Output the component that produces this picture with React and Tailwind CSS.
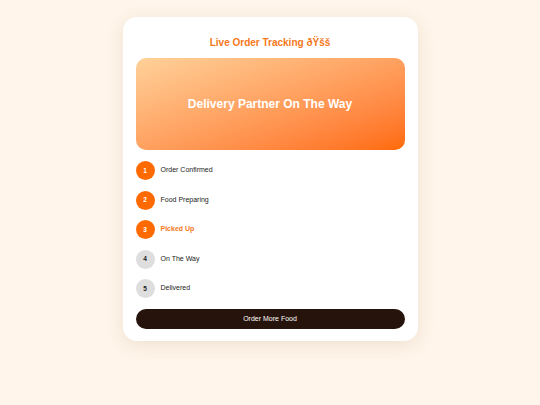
const steps = [
  { n: 1, label: 'Order Confirmed', done: true },
  { n: 2, label: 'Food Preparing', done: true },
  { n: 3, label: 'Picked Up', done: true, active: true },
  { n: 4, label: 'On The Way', done: false },
  { n: 5, label: 'Delivered', done: false },
];

export default function App() {
  return (
    <div className="min-h-[405px] bg-[#fff5ea] pt-[17px] font-['Liberation_Sans',Arial,sans-serif]">
      <div className="mx-auto w-[295px] rounded-[14px] bg-white px-[13px] pb-[12px] pt-[18px] shadow-[0_4px_18px_rgba(120,80,40,0.12)]">
        <h2 className="text-center text-[10px] font-bold leading-[16px] text-[#f5781a]">
          Live Order Tracking {'\u00f0\u0178\u0161\u0161'}
        </h2>

        <div className="mt-[7px] flex h-[92px] items-center justify-center rounded-[10px] bg-gradient-to-br from-[#ffd199] to-[#ff6a00]">
          <span className="text-[12px] font-bold text-white">Delivery Partner On The Way</span>
        </div>

        <div className="mt-[11px] flex flex-col gap-[10.5px]">
          {steps.map((s) => (
            <div key={s.n} className="flex items-center gap-[6px]">
              <div
                className={
                  s.done
                    ? 'flex h-[19px] w-[19px] items-center justify-center rounded-full bg-[#ff6a00] text-[6.5px] font-bold text-white'
                    : 'flex h-[19px] w-[19px] items-center justify-center rounded-full bg-[#dedede] text-[6.5px] font-bold text-[#222]'
                }
              >
                {s.n}
              </div>
              <span
                className={
                  s.active
                    ? 'text-[7px] font-bold text-[#f5781a]'
                    : 'text-[7px] text-[#222]'
                }
              >
                {s.label}
              </span>
            </div>
          ))}
        </div>

        <button className="mt-[11px] flex h-[20px] w-full items-center justify-center rounded-full bg-[#26130b] text-[7px] text-white">
          Order More Food
        </button>
      </div>
    </div>
  );
}
